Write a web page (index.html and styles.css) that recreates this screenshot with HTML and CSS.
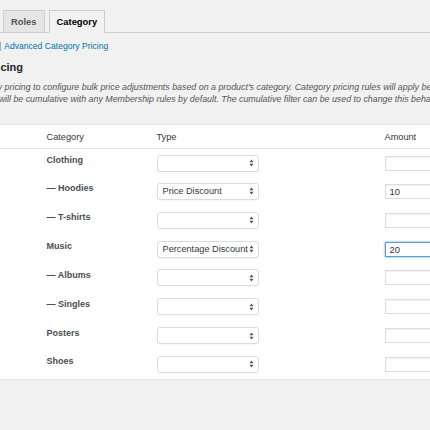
FILE: index.html
```html
<!DOCTYPE html>
<html lang="en">
<head>
  <meta charset="UTF-8">
  <meta name="viewport" content="width=device-width, initial-scale=1">
  <title>Category Pricing</title>
  <link rel="stylesheet" href="styles.css">
</head>
<body>
  <div class="wrap">
    <nav class="nav-tabs">
      <a href="#" class="tab">Roles</a>
      <a href="#" class="tab active">Category</a>
    </nav>

    <ul class="subsubsub">
      <li><a href="#" class="current">Category Pricing</a> |</li>
      <li><a href="#">Advanced Category Pricing</a></li>
    </ul>

    <h2>Category Pricing</h2>
    <p class="description">
      Use category pricing to configure bulk price adjustments based on a product's category. Category pricing rules will apply before any<br>
      These rules will be cumulative with any Membership rules by default. The cumulative filter can be used to change this behavior.
    </p>

    <!-- Category rules table -->
    <table class="rules">
      <colgroup>
        <col class="col-check">
        <col class="col-cat">
        <col class="col-type">
        <col class="col-amount">
      </colgroup>
      <thead>
        <tr>
          <th></th>
          <th>Category</th>
          <th>Type</th>
          <th>Amount</th>
        </tr>
      </thead>
      <tbody>
        <tr>
          <td></td>
          <th>Clothing</th>
          <td><div class="select"><span></span><svg width="5" height="8" viewBox="0 0 5 8"><path d="M2.5 0.5 L4.6 3.3 H0.4 Z M2.5 7.5 L4.6 4.7 H0.4 Z"/></svg></div></td>
          <td><input type="text" class="amount"></td>
        </tr>
        <tr>
          <td></td>
          <th>— Hoodies</th>
          <td><div class="select"><span>Price Discount</span><svg width="5" height="8" viewBox="0 0 5 8"><path d="M2.5 0.5 L4.6 3.3 H0.4 Z M2.5 7.5 L4.6 4.7 H0.4 Z"/></svg></div></td>
          <td><input type="text" class="amount" value="10"></td>
        </tr>
        <tr>
          <td></td>
          <th>— T-shirts</th>
          <td><div class="select"><span></span><svg width="5" height="8" viewBox="0 0 5 8"><path d="M2.5 0.5 L4.6 3.3 H0.4 Z M2.5 7.5 L4.6 4.7 H0.4 Z"/></svg></div></td>
          <td><input type="text" class="amount"></td>
        </tr>
        <tr>
          <td></td>
          <th>Music</th>
          <td><div class="select"><span>Percentage Discount</span><svg width="5" height="8" viewBox="0 0 5 8"><path d="M2.5 0.5 L4.6 3.3 H0.4 Z M2.5 7.5 L4.6 4.7 H0.4 Z"/></svg></div></td>
          <td><input type="text" class="amount focus" value="20"></td>
        </tr>
        <tr>
          <td></td>
          <th>— Albums</th>
          <td><div class="select"><span></span><svg width="5" height="8" viewBox="0 0 5 8"><path d="M2.5 0.5 L4.6 3.3 H0.4 Z M2.5 7.5 L4.6 4.7 H0.4 Z"/></svg></div></td>
          <td><input type="text" class="amount"></td>
        </tr>
        <tr>
          <td></td>
          <th>— Singles</th>
          <td><div class="select"><span></span><svg width="5" height="8" viewBox="0 0 5 8"><path d="M2.5 0.5 L4.6 3.3 H0.4 Z M2.5 7.5 L4.6 4.7 H0.4 Z"/></svg></div></td>
          <td><input type="text" class="amount"></td>
        </tr>
        <tr>
          <td></td>
          <th>Posters</th>
          <td><div class="select"><span></span><svg width="5" height="8" viewBox="0 0 5 8"><path d="M2.5 0.5 L4.6 3.3 H0.4 Z M2.5 7.5 L4.6 4.7 H0.4 Z"/></svg></div></td>
          <td><input type="text" class="amount"></td>
        </tr>
        <tr>
          <td></td>
          <th>Shoes</th>
          <td><div class="select"><span></span><svg width="5" height="8" viewBox="0 0 5 8"><path d="M2.5 0.5 L4.6 3.3 H0.4 Z M2.5 7.5 L4.6 4.7 H0.4 Z"/></svg></div></td>
          <td><input type="text" class="amount"></td>
        </tr>
      </tbody>
    </table>
  </div>
</body>
</html>
```

FILE: styles.css
```css
html, body {
  margin: 0;
  padding: 0;
  overflow: hidden;
}

body {
  background: #f1f1f1;
  color: #444;
  font-family: 'Liberation Sans', Arial, sans-serif;
  font-size: 8.5px;
}

/* the screenshot is cropped on the left, so the page is shifted */
.wrap {
  margin-left: -65px;
  width: 620px;
}

.nav-tabs {
  display: flex;
  padding: 10px 0 0 64px;
  border-bottom: 1px solid #ccc;
}

.tab {
  margin-left: 4px;
  margin-bottom: -1px;
  padding: 4px 7px 3px;
  line-height: 14px;
  font-size: 9.4px;
  font-weight: bold;
  color: #555;
  text-decoration: none;
  background: #e5e5e5;
  border: 1px solid #ccc;
}

.tab.active {
  background: #f1f1f1;
  color: #000;
  border-bottom-color: #f1f1f1;
}

.subsubsub {
  list-style: none;
  margin: 8px 0 0 -2px;
  padding: 0;
  display: flex;
  line-height: 11px;
  font-size: 8.6px;
  color: #666;
}

.subsubsub li {
  margin-right: 3px;
}

.subsubsub a {
  color: #0073aa;
  text-decoration: none;
}

.subsubsub a.current {
  color: #000;
}

h2 {
  margin: 8px 0 0;
  font-size: 11px;
  line-height: 14px;
  font-weight: bold;
  color: #23282d;
}

.description {
  margin: 8px 0 0 15px;
  font-size: 8.85px;
  font-style: italic;
  line-height: 11.5px;
  color: #555;
  white-space: nowrap;
}

.rules {
  margin-top: 19px;
  width: 549px;
  table-layout: fixed;
  border-collapse: collapse;
  background: #fff;
  border: 1px solid #e5e5e5;
  box-shadow: 0 1px 1px rgba(0, 0, 0, 0.04);
}

.col-check { width: 111px; }
.col-cat { width: 110px; }
.col-type { width: 228px; }
.col-amount { width: 100px; }

.rules thead th {
  height: 22px;
  padding: 1px 0 0;
  text-align: left;
  font-size: 9.2px;
  font-weight: normal;
  color: #32373c;
  border-bottom: 1px solid #e1e1e1;
}

.rules tbody tr {
  height: 28.85px;
}

.rules tbody th,
.rules tbody td {
  padding: 0;
  vertical-align: top;
}

.rules tbody th {
  padding-top: 6px;
  text-align: left;
  font-size: 9px;
  line-height: 11px;
  font-weight: bold;
  color: #4a4d52;
}

.rules tbody td {
  padding-top: 5.5px;
}

.select {
  box-sizing: border-box;
  width: 102px;
  height: 17px;
  display: flex;
  align-items: center;
  justify-content: space-between;
  padding: 0 4px 0 5px;
  background: #fff;
  border: 1px solid #dcdcdc;
  border-radius: 3px;
  box-shadow: 0 1px 0 rgba(0, 0, 0, 0.03);
  font-size: 9.2px;
  color: #32373c;
  white-space: nowrap;
}

.select svg {
  fill: #555;
  flex: none;
}

.amount {
  box-sizing: border-box;
  display: block;
  width: 80px;
  height: 15px;
  margin: 1px 0 0;
  padding: 0 4px;
  font-family: 'Liberation Sans', Arial, sans-serif;
  font-size: 9.5px;
  color: #32373c;
  background: #fff;
  border: 1px solid #ddd;
  border-radius: 0;
  box-shadow: inset 0 1px 2px rgba(0, 0, 0, 0.07);
  outline: none;
}

.amount.focus {
  border-color: #5b9dd9;
  box-shadow: 0 0 2px rgba(30, 140, 190, 0.8);
}
```
